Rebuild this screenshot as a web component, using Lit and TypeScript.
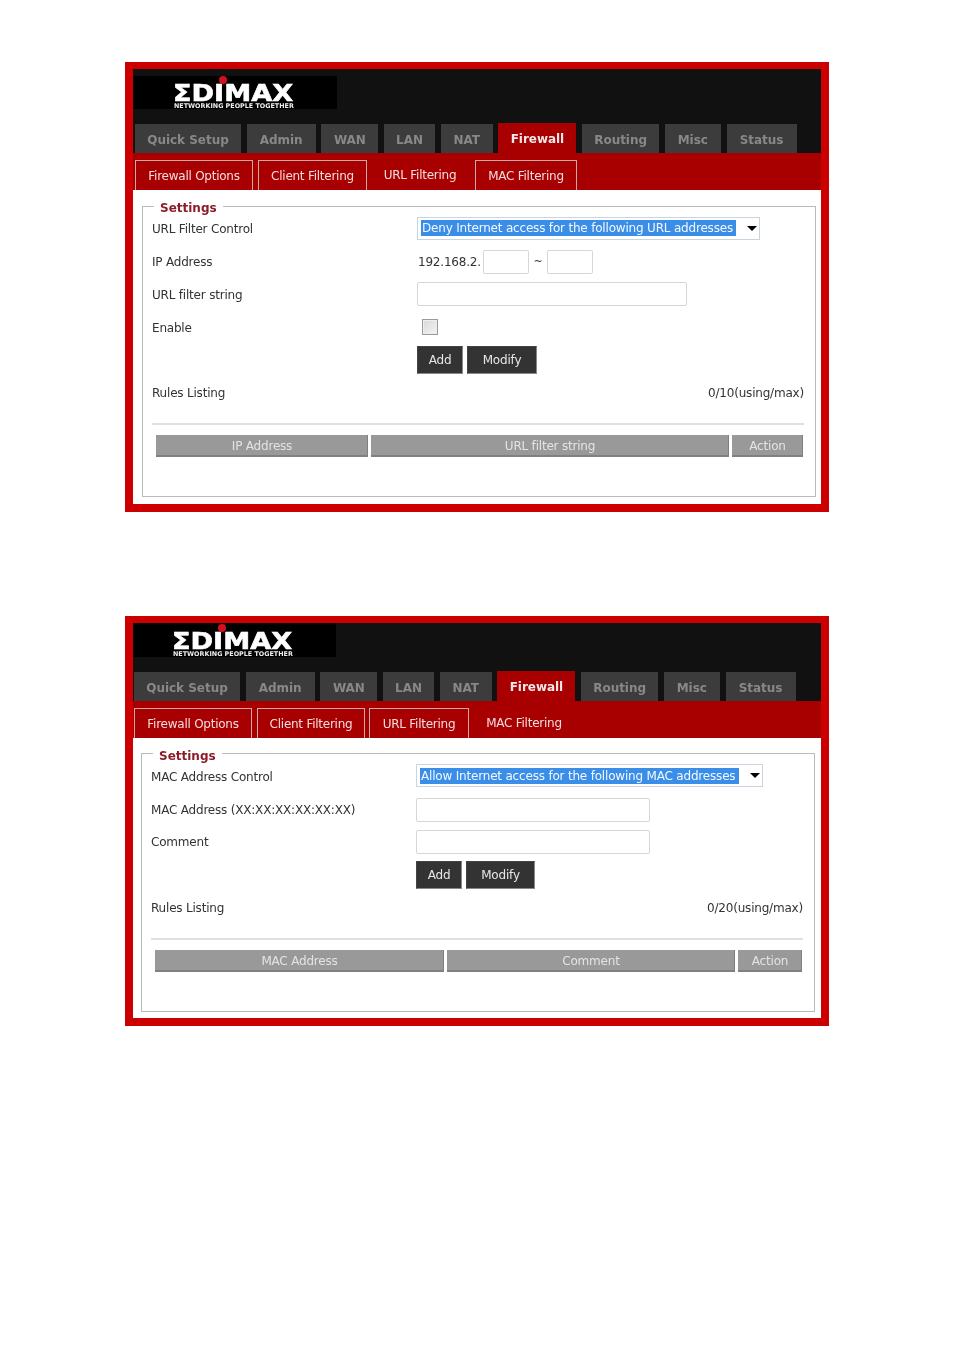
import { LitElement, html, css } from "lit";
import { customElement, property } from "lit/decorators.js";

const TABS = ["Quick Setup", "Admin", "WAN", "LAN", "NAT", "Firewall", "Routing", "Misc", "Status"];
const SUBTABS = ["Firewall Options", "Client Filtering", "URL Filtering", "MAC Filtering"];

@customElement("fw-panel")
class FwPanel extends LitElement {
  @property() kind = "url";

  static styles = css`
    :host { display: block; font: 12px/16px "DejaVu Sans", sans-serif; color: #333; filter: blur(0.35px); }
    .frame { width: 688px; border: solid #cc0000; border-width: 7px 8px 8px; background: #fff; }
    .head { background: #111; display: flex; flex-direction: column; justify-content: space-between; }
    .url .head { height: 84px; padding-top: 7px; box-sizing: border-box; }
    .mac .head { height: 78px; }
    .logo { position: relative; width: 204px; height: 33px; background: #000; overflow: hidden; }
    .mac .logo { width: 203px; height: 34px; }
    .brand { position: absolute; left: 40px; top: 7px; color: #fff; font: 700 23px/21px "DejaVu Sans", sans-serif; -webkit-text-stroke: 0.6px #fff; transform: scaleX(1.18); transform-origin: 0 0; }
    .mac .brand { top: 8px; left: 39px; }
    .dot { position: absolute; left: 86px; top: 0; width: 8px; height: 8px; border-radius: 50%; background: #d5101c; }
    .mac .dot { left: 85px; top: 1px; }
    .tag { position: absolute; left: 41px; top: 27px; color: #eee; font: 700 6.4px/7px "DejaVu Sans", sans-serif; white-space: nowrap; }
    .mac .tag { left: 40px; top: 28px; }
    .tabs { display: grid; grid-template-columns: 106px 69px 57px 51px 52px 78px 77px 56px 70px; column-gap: 5.7px; align-items: end; padding-left: 2px; }
    .mac .tabs { padding-left: 1px; }
    .tab { height: 29px; box-sizing: border-box; padding-top: 3px; background: #3c3c3c; color: #888; font-weight: 700; font-size: 12px; letter-spacing: -0.03px; display: flex; align-items: center; justify-content: center; }
    .tab.on { height: 30px; background: #a80000; color: #f0e8e8; padding-top: 2px; }
    .band { height: 37px; box-sizing: border-box; padding: 7px 0 0 2px; background: #a80000; display: grid; column-gap: 0; align-items: end; }
    .url .band { grid-template-columns: 118px 5px 109px 2px 106px 102px; }
    .mac .band { padding-left: 1px; grid-template-columns: 118px 5px 108px 4px 100px 110px; }
    .sub { height: 30px; box-sizing: border-box; padding-top: 1px; border: 1px solid #d0a8a8; border-bottom: 0; color: #f3dddd; letter-spacing: -0.25px; display: flex; align-items: center; justify-content: center; }
    .sub.on { border-color: transparent; padding-top: 0; padding-bottom: 1px; }
    .url .sub.on { padding-right: 4px; }
    .body { padding: 9px 5px 7px 9px; }
    .mac .body { padding: 9px 6px 6px 8px; }
    fieldset { margin: 0; padding: 0 11px 39px 9px; border: 1px solid #bbb; min-width: 0; }
    legend { margin-left: 2px; padding: 0 6px; font: 700 12px/14px "DejaVu Sans", sans-serif; color: #8c1c28; }
    legend span { display: block; transform: translateY(1.5px); }
    .row { height: 32.75px; display: grid; grid-template-columns: 265px 1fr; align-items: center; letter-spacing: -0.2px; }
    .ctl { display: flex; align-items: center; }
    .select { height: 23px; box-sizing: border-box; border: 1px solid #c8d4e0; display: flex; align-items: center; padding-left: 3px; }
    .url .select { width: 343px; margin-bottom: 2px; }
    .mac .select { width: 347px; margin-bottom: 2px; }
    .sel-text { height: 16px; background: #3a8ee8; color: #f4f8ff; padding: 0 1px; font-size: 12px; line-height: 16px; white-space: nowrap; box-sizing: border-box; letter-spacing: -0.19px; }
    .url .sel-text { width: 315px; }
    .mac .sel-text { width: 319px; }
    .arrow { margin-left: 11px; width: 0; height: 0; border: 5px solid transparent; border-top: 5px solid #000; border-bottom: 0; }
    input[type="text"] { margin: 0; padding: 0; height: 24px; box-sizing: border-box; border: 1px solid #d6d6d6; border-radius: 2px; background: #fff; outline: 0; }
    .ip { margin-left: 1px; }
    .ip-a { width: 46px; margin-left: 2px !important; }
    .ip-b { width: 46px; }
    .tilde { width: 18px; text-align: center; font-size: 11px; }
    .w-url { width: 270px; margin-bottom: 2px !important; }
    .w-mac { width: 234px; }
    .check { margin: 0 0 2px 5px; width: 16px; height: 16px; box-sizing: border-box; border: 1px solid #9a9a9a; background: linear-gradient(135deg, #d8d8d8, #f4f4f4); box-shadow: inset 0 0 0 1px #eee; }
    .btns { display: flex; gap: 4px; }
    .btn { height: 28px; box-sizing: border-box; background: #333; color: #e6e6e6; border: 1px solid #555; border-color: #444 #888 #888 #444; display: flex; align-items: center; justify-content: center; }
    .add { width: 46px; }
    .modify { width: 70px; }
    .mac .modify { width: 69px; }
    .rules { display: flex; justify-content: space-between; align-items: center; height: 32.75px; letter-spacing: -0.2px; }
    hr { margin: 13px 0 10px; border: 0; border-top: 2px solid #e0e0e0; }
    .mac hr { margin-top: 14px; }
    .thead { display: grid; column-gap: 3px; margin: 0 2px 0 4px; height: 22px; }
    .url .thead { grid-template-columns: 212px 358px 71px; }
    .mac .thead { grid-template-columns: 289px 288px 64px; }
    .th { background: #999; box-shadow: inset -1px -2px 0 #808080; color: #e4e4e4; display: flex; align-items: center; justify-content: center; letter-spacing: -0.2px; }
  `;

  render() {
    const url = this.kind === "url";
    const active = url ? 2 : 3;
    const subs: unknown[] = [];
    SUBTABS.forEach((s, i) => {
      subs.push(html`<div class="sub ${i === active ? "on" : ""}">${s}</div>`);
      if (i < 2) subs.push(html`<span></span>`);
    });
    const btns = html`<div class="btns"><div class="btn add">Add</div><div class="btn modify">Modify</div></div>`;
    return html`
      <div class="frame ${this.kind}">
        <div class="head">
          <div class="logo">
            <span class="brand">ΣDIMAX</span><span class="dot"></span>
            <span class="tag">NETWORKING PEOPLE TOGETHER</span>
          </div>
          <div class="tabs">
            ${TABS.map((t) => html`<div class="tab ${t === "Firewall" ? "on" : ""}">${t}</div>`)}
          </div>
        </div>
        <div class="band">${subs}</div>
        <div class="body">
          <fieldset>
            <legend><span>Settings</span></legend>
            <div class="rows">
              ${url
                ? html`
                    <div class="row"><span>URL Filter Control</span>
                      <div class="select"><div class="sel-text">Deny Internet access for the following URL addresses</div><div class="arrow"></div></div></div>
                    <div class="row"><span>IP Address</span>
                      <div class="ctl"><span class="ip">192.168.2.</span><input type="text" class="ip-a" /><span class="tilde">~</span><input type="text" class="ip-b" /></div></div>
                    <div class="row"><span>URL filter string</span><div class="ctl"><input type="text" class="w-url" /></div></div>
                    <div class="row"><span>Enable</span><div class="ctl"><div class="check"></div></div></div>
                    <div class="row"><span></span>${btns}</div>
                    <div class="rules"><span>Rules Listing</span><span>0/10(using/max)</span></div>
                  `
                : html`
                    <div class="row"><span>MAC Address Control</span>
                      <div class="select"><div class="sel-text">Allow Internet access for the following MAC addresses</div><div class="arrow"></div></div></div>
                    <div class="row"><span>MAC Address (XX:XX:XX:XX:XX:XX)</span><div class="ctl"><input type="text" class="w-mac" /></div></div>
                    <div class="row"><span>Comment</span><div class="ctl"><input type="text" class="w-mac" /></div></div>
                    <div class="row"><span></span>${btns}</div>
                    <div class="rules"><span>Rules Listing</span><span>0/20(using/max)</span></div>
                  `}
            </div>
            <hr />
            <div class="thead">
              ${(url ? ["IP Address", "URL filter string", "Action"] : ["MAC Address", "Comment", "Action"]).map(
                (h) => html`<div class="th">${h}</div>`
              )}
            </div>
          </fieldset>
        </div>
      </div>
    `;
  }
}

@customElement("app-root")
class AppRoot extends LitElement {
  static styles = css`
    :host { display: block; height: 1350px; background: #fff; }
    .page { padding: 62px 0 0 125px; display: flex; flex-direction: column; gap: 104px; }
  `;
  render() {
    return html`<div class="page"><fw-panel kind="url"></fw-panel><fw-panel kind="mac"></fw-panel></div>`;
  }
}
